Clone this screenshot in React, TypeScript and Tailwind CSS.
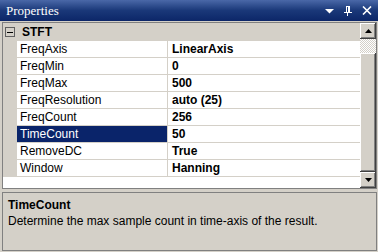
import React from "react";

const rows = [
  { name: "FreqAxis", value: "LinearAxis" },
  { name: "FreqMin", value: "0" },
  { name: "FreqMax", value: "500" },
  { name: "FreqResolution", value: "auto (25)" },
  { name: "FreqCount", value: "256" },
  { name: "TimeCount", value: "50", selected: true },
  { name: "RemoveDC", value: "True" },
  { name: "Window", value: "Hanning" },
];

const bevel =
  "bg-[#d4d0c8] shadow-[inset_-1px_-1px_#404040,inset_1px_1px_#ffffff,inset_-2px_-2px_#808080,inset_2px_2px_#d4d0c8]";

export default function App() {
  return (
    <div className="w-[378px] h-[252px] overflow-hidden bg-[#d4d0c8] flex flex-col font-['Liberation_Sans',Arial,sans-serif] text-[12px] text-black">
      {/* title bar */}
      <div className="h-[21px] shrink-0 flex items-center pl-[6px] pr-[6px] bg-gradient-to-b from-[#4a68a8] via-[#1a3879] to-[#0c2668] text-white">
        <span className="font-['Liberation_Serif',serif] text-[13px] leading-none">Properties</span>
        <div className="ml-auto flex items-center gap-[10px]">
          <svg width="9" height="6" viewBox="0 0 9 6">
            <path d="M0 1h9L4.5 5.5z" fill="#fff" />
          </svg>
          <svg width="8" height="10" viewBox="0 0 8 10">
            <rect x="2" y="0" width="1" height="6" fill="#fff" />
            <rect x="2" y="0" width="4" height="1" fill="#fff" />
            <rect x="4" y="0" width="2" height="6" fill="#fff" />
            <rect x="0" y="6" width="8" height="1" fill="#fff" />
            <rect x="3" y="7" width="1" height="3" fill="#fff" />
          </svg>
          <svg width="10" height="9" viewBox="0 0 10 9">
            <path d="M1 0.5l8 8M9 0.5l-8 8" stroke="#fff" strokeWidth="1.6" />
          </svg>
        </div>
      </div>

      {/* grid */}
      <div className="mt-[1px] ml-[2px] mr-[1px] h-[167px] shrink-0 border border-[#808080] bg-white flex">
        <div className="flex-1 flex flex-col">
          <div className="h-[18px] bg-[#d4d0c8] flex items-center">
            <div className="ml-[2px] w-[10px] h-[10px] border border-[#606060] bg-[#d4d0c8] flex items-center justify-center">
              <div className="w-[6px] h-[1px] bg-black" />
            </div>
            <span className="ml-[7px] font-bold text-[12px]">STFT</span>
          </div>
          {rows.map((r) => (
            <div key={r.name} className="h-[17px] flex">
              <div className="w-[14px] bg-[#d4d0c8]" />
              <div
                className={
                  "w-[151px] border-r border-b border-[#d4d0c8] pl-[3px] flex items-center " +
                  (r.selected ? "bg-[#0a246a] text-white" : "")
                }
              >
                {r.name}
              </div>
              <div className="flex-1 border-b border-[#d4d0c8] pl-[4px] flex items-center font-bold">
                {r.value}
              </div>
            </div>
          ))}
        </div>
        {/* scrollbar */}
        <div className="w-[16px] flex flex-col">
          <div className={"h-[16px] flex items-center justify-center " + bevel}>
            <svg width="7" height="4" viewBox="0 0 7 4">
              <path d="M3.5 0L7 4H0z" fill="#000" />
            </svg>
          </div>
          <div className="h-[14px] bg-[repeating-conic-gradient(#d4d0c8_0%_25%,#ffffff_0%_50%)] bg-[length:2px_2px]" />
          <div className={"flex-1 " + bevel} />
          <div className={"h-[16px] flex items-center justify-center " + bevel}>
            <svg width="7" height="4" viewBox="0 0 7 4">
              <path d="M0 0h7L3.5 4z" fill="#000" />
            </svg>
          </div>
        </div>
      </div>

      {/* description */}
      <div className="mt-[3px] ml-[2px] mr-[1px] h-[59px] shrink-0 border border-[#808080] bg-[#d4d0c8] px-[5px] pt-[5px]">
        <div className="font-bold text-[12px] leading-[14px]">TimeCount</div>
        <div className="mt-[2px] leading-[14px]">Determine the max sample count in time-axis of the result.</div>
      </div>
    </div>
  );
}
